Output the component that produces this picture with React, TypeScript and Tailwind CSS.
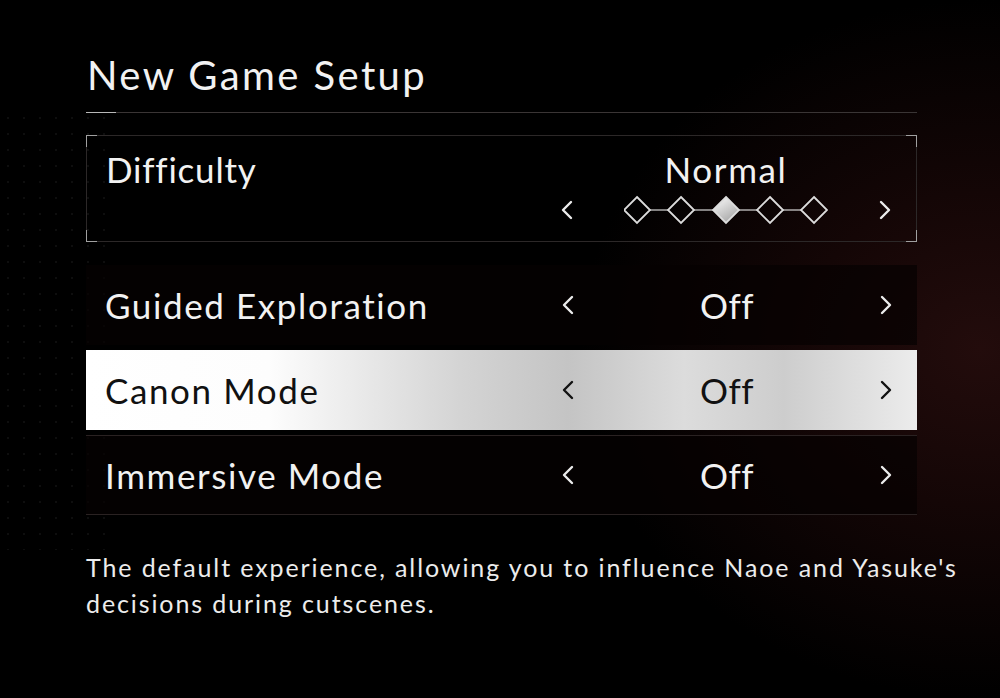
import React from "react"

const font = { fontFamily: "Lato, 'Noto Sans', sans-serif" }

function Chevron({ dir, dark }: { dir: "left" | "right"; dark?: boolean }) {
  const pts = dir === "left" ? "11,2 3,10 11,18" : "3,2 11,10 3,18"
  return (
    <svg width="14" height="20" viewBox="0 0 14 20" className="shrink-0">
      <polyline
        points={pts}
        fill="none"
        stroke={dark ? "#111" : "#ececec"}
        strokeWidth="2.4"
        strokeLinecap="round"
        strokeLinejoin="round"
      />
    </svg>
  )
}

function DifficultyPips({ value }: { value: number }) {
  const centers = [13, 57, 102, 146, 190]
  return (
    <svg width="204" height="30" viewBox="0 0 204 30">
      <defs>
        <linearGradient id="pip" x1="0" y1="0" x2="0.6" y2="1">
          <stop offset="0" stopColor="#ffffff" />
          <stop offset="1" stopColor="#a8a8a8" />
        </linearGradient>
      </defs>
      {centers.slice(0, -1).map((c, i) => (
        <line key={i} x1={c + 13} y1="15" x2={centers[i + 1] - 13} y2="15" stroke="#d8d8d8" strokeWidth="1.2" />
      ))}
      {centers.map((c, i) => (
        <polygon
          key={c}
          points={`${c},2 ${c + 13},15 ${c},28 ${c - 13},15`}
          fill={i === value ? "url(#pip)" : "none"}
          stroke="#dcdcdc"
          strokeWidth="1.8"
        />
      ))}
    </svg>
  )
}

function OptionRow({ label, value, active, lines }: { label: string; value: string; active?: boolean; lines?: boolean }) {
  return (
    <div
      className={
        "flex h-[80px] items-center pl-[19px] pr-[24px] " +
        (active
          ? "bg-[linear-gradient(90deg,#ffffff_0%,#fdfdfd_22%,#d4d4d4_45%,#c4c4c4_58%,#dcdcdc_72%,#cdcdcd_84%,#ececec_100%)] text-[#111]"
          : "bg-[#050202]/70 text-[#f2f2f2]") +
        (lines ? " border-y border-[#2a2222]" : "")
      }
    >
      <span className="flex-1 text-[35px] leading-none tracking-[1.6px]">{label}</span>
      <div className="flex w-[332px] items-center justify-between">
        <Chevron dir="left" dark={active} />
        <span className="text-[35px] leading-none tracking-[0.5px]">{value}</span>
        <Chevron dir="right" dark={active} />
      </div>
    </div>
  )
}

export default function App() {
  return (
    <div
      style={font}
      className="relative min-h-[698px] w-full overflow-hidden bg-[radial-gradient(ellipse_40%_50%_at_98%_50%,#230c0c_0%,#140606_45%,#000000_100%)] text-[#f2f2f2]"
    >
      {/* faint dotted texture on the left */}
      <div className="absolute left-0 top-[110px] h-[440px] w-[110px] bg-[radial-gradient(circle,#0e0e0e_1px,transparent_1.5px)] bg-[length:16px_16px]" />

      <div className="relative pl-[86px] pr-[83px] pt-[50px]">
        <h1 className="pl-[1px] text-[40px] font-normal leading-[50px] tracking-[2.4px]">New Game Setup</h1>

        <div className="mt-[12px] flex h-px">
          <div className="w-[30px] bg-[#b8b8b8]" />
          <div className="flex-1 bg-[#3a3535]" />
        </div>

        {/* Difficulty */}
        <div className="relative mt-[22px] flex h-[107px] border border-[#2c2828] pl-[19px] pr-[24px] pt-[12px]">
          <span className="absolute -left-px -top-px h-[12px] w-[11px] border-l border-t border-[#a0a0a0]" />
          <span className="absolute -bottom-px -left-px h-[12px] w-[11px] border-b border-l border-[#a0a0a0]" />
          <span className="absolute -right-px -top-px h-[12px] w-[11px] border-r border-t border-[#a0a0a0]" />
          <span className="absolute -bottom-px -right-px h-[12px] w-[11px] border-b border-r border-[#a0a0a0]" />

          <span className="flex-1 text-[35px] leading-[42px] tracking-[0.8px]">Difficulty</span>
          <div className="flex w-[332px] flex-col">
            <span className="text-center text-[35px] leading-[42px] tracking-[1.6px]">Normal</span>
            <div className="mt-[5px] flex h-[30px] items-center justify-between">
              <Chevron dir="left" />
              <DifficultyPips value={2} />
              <Chevron dir="right" />
            </div>
          </div>
        </div>

        {/* Options */}
        <div className="mt-[23px] flex flex-col gap-[5px]">
          <OptionRow label="Guided Exploration" value="Off" />
          <OptionRow label="Canon Mode" value="Off" active />
          <OptionRow label="Immersive Mode" value="Off" lines />
        </div>

        <p className="mt-[34px] whitespace-nowrap text-[25px] leading-[36px] tracking-[1.9px] text-[#ececec]">
          The default experience, allowing you to influence Naoe and Yasuke's
          <br />
          decisions during cutscenes.
        </p>
      </div>
    </div>
  )
}
